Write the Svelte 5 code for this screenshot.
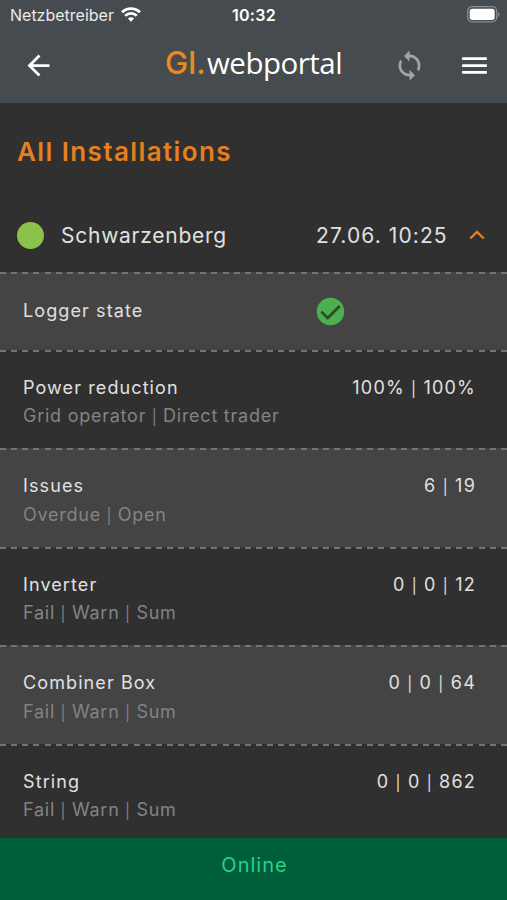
<script>
  const rows = [
    { label: 'Logger state', ok: true },
    { label: 'Power reduction', hint: 'Grid operator | Direct trader', value: '100% | 100%' },
    { label: 'Issues', hint: 'Overdue | Open', value: '6 | 19' },
    { label: 'Inverter', hint: 'Fail | Warn | Sum', value: '0 | 0 | 12' },
    { label: 'Combiner Box', hint: 'Fail | Warn | Sum', value: '0 | 0 | 64' },
    { label: 'String', hint: 'Fail | Warn | Sum', value: '0 | 0 | 862' }
  ];
</script>

{#snippet piped(text)}
  {#each text.split(' | ') as part, i}{#if i}<span class="pipe">{' | '}</span>{/if}{part}{/each}
{/snippet}

<div class="app">
  <header>
    <div class="status">
      <div class="carrier">
        <span>Netzbetreiber</span>
        <svg width="20" height="15" viewBox="0 0 20 15" fill="none" stroke="#fff" stroke-width="2.7">
          <path d="M1 5.3a12.7 12.7 0 0 1 18 0" />
          <path d="M4.2 8.7a8.2 8.2 0 0 1 11.6 0" />
          <path d="M10 14.7l-3.1-3.2a4.4 4.4 0 0 1 6.2 0z" fill="#fff" stroke="none" />
        </svg>
      </div>
      <time>10:32</time>
      <svg class="battery" width="33" height="17" viewBox="0 0 33 17">
        <rect x=".7" y=".7" width="29" height="15.2" rx="4.4" fill="none" stroke="#8b8e90" stroke-width="1.3" />
        <rect x="2.7" y="2.7" width="25" height="11.2" rx="2.6" fill="#fff" />
        <path d="M31.2 6v5c1.8-.7 1.8-4.3 0-5z" fill="#8b8e90" />
      </svg>
    </div>
    <nav>
      <svg class="back" width="33" height="33" viewBox="0 0 24 24" fill="#fff">
        <path d="M20 11H7.83l5.59-5.59L12 4l-8 8 8 8 1.41-1.41L7.83 13H20v-2z" />
      </svg>
      <div class="logo"><span class="gi">GI.</span><span class="portal">webportal</span></div>
      <svg class="sync" width="33" height="33" viewBox="0 0 24 24" fill="#a2a4a6">
        <path d="M12 4V1L8 5l4 4V6c3.31 0 6 2.69 6 6 0 1.01-.25 1.97-.7 2.8l1.46 1.46A7.93 7.93 0 0 0 20 12c0-4.42-3.58-8-8-8zm0 14c-3.31 0-6-2.69-6-6 0-1.01.25-1.97.7-2.8L5.24 7.74A7.93 7.93 0 0 0 4 12c0 4.42 3.58 8 8 8v3l4-4-4-4v3z" />
      </svg>
      <svg class="menu" width="33" height="33" viewBox="0 0 24 24" fill="#fff">
        <path d="M3 18h18v-2H3v2zm0-5h18v-2H3v2zm0-7v2h18V6H3z" />
      </svg>
    </nav>
  </header>

  <main>
    <h1>All Installations</h1>
    <div class="site">
      <i class="dot"></i>
      <span class="name">Schwarzenberg</span>
      <span class="date">27.06. 10:25</span>
      <svg width="16" height="10" viewBox="0 0 16 10" fill="none" stroke="#e08126" stroke-width="2.4">
        <path d="M1.2 8.5L8 1.9l6.8 6.6" />
      </svg>
    </div>
    <ul>
      {#each rows as row}
        <li class:single={row.ok}>
          <div class="text">
            <p class="label">{row.label}</p>
            {#if row.hint}<p class="hint">{@render piped(row.hint)}</p>{/if}
          </div>
          {#if row.ok}
            <svg class="check" width="33" height="33" viewBox="0 0 24 24">
              <circle cx="12" cy="12" r="10" fill="#4caf50" />
              <path d="M5.3 12.1l4.7 4.6 8.7-8.7" fill="none" stroke="#2c4a2e" stroke-width="2" />
            </svg>
          {:else}
            <span class="value">{@render piped(row.value)}</span>
          {/if}
        </li>
      {/each}
    </ul>
  </main>

  <footer>Online</footer>
</div>

<style>
  :global(body) {
    margin: 0;
    background: #303030;
  }

  .app {
    display: flex;
    flex-direction: column;
    height: 900px;
    overflow: hidden;
    background: #303030;
    color: #e0e0e0;
    font-family: Inter, sans-serif;
  }

  header {
    flex: none;
    height: 103px;
    background: #464b4f;
  }

  .status {
    display: grid;
    grid-template-columns: 1fr auto 1fr;
    align-items: center;
    height: 29px;
    padding: 0 7px 0 8px;
    color: #fff;
    font-size: 16px;
  }

  .carrier {
    display: flex;
    align-items: center;
    gap: 7px;
    padding-left: 2px;
    color: #e9eaeb;
  }

  .status time {
    font-weight: 600;
    letter-spacing: 0.3px;
  }

  .battery {
    justify-self: end;
  }

  nav {
    display: flex;
    align-items: center;
    height: 73px;
    padding: 0 16px 0 22px;
  }

  .logo {
    display: flex;
    align-items: baseline;
    margin-left: 110px;
    padding-bottom: 5px;
    line-height: 40px;
    white-space: nowrap;
  }

  .gi {
    width: 42px;
    color: #e98a1f;
    font-size: 31px;
    font-weight: 500;
    letter-spacing: -0.2px;
  }

  .portal {
    width: 136px;
    color: #fff;
    font-family: "Open Sans", sans-serif;
    font-size: 29.5px;
    letter-spacing: -0.5px;
  }

  .sync {
    margin-left: auto;
  }

  .menu {
    margin-left: 32px;
  }

  main {
    flex: 1;
    min-height: 0;
    overflow: hidden;
  }

  h1 {
    margin: 0;
    padding: 33px 17px 0;
    color: #e67f1e;
    font-size: 26px;
    font-weight: 600;
    line-height: 32px;
    letter-spacing: 1.4px;
  }

  .site {
    display: flex;
    align-items: center;
    height: 74px;
    margin-top: 30px;
    padding: 0 22px 0 17px;
    font-size: 21px;
    letter-spacing: 1.1px;
  }

  .name {
    letter-spacing: 0.75px;
  }

  .dot {
    width: 27px;
    height: 27px;
    margin-right: 17px;
    border-radius: 50%;
    background: #8bc34a;
  }

  .date {
    width: 153px;
    margin-left: auto;
    white-space: nowrap;
  }

  ul {
    margin: 0;
    padding: 0;
    list-style: none;
  }

  li {
    display: flex;
    justify-content: space-between;
    height: 98.5px;
    padding: 24px 31px 0 23px;
    box-sizing: border-box;
    background: repeating-linear-gradient(90deg, #747474 0 6px, transparent 6px 11.13px) 0 0 / 100% 2px no-repeat;
    font-size: 18px;
    line-height: 28.5px;
    letter-spacing: 1.1px;
  }

  li:nth-child(odd) {
    background-color: #444;
  }

  .single {
    height: 77.5px;
    align-items: center;
    padding-top: 1.5px;
  }

  p {
    margin: 0;
  }

  .hint {
    color: #838383;
    line-height: 28px;
    letter-spacing: 0.75px;
  }

  .pipe {
    font-size: 15px;
    line-height: 1;
    white-space: pre;
  }

  .hint .pipe {
    word-spacing: 0.6px;
  }

  .value {
    letter-spacing: 1.2px;
  }

  .value .pipe {
    word-spacing: 0.8px;
  }

  .check {
    margin-right: 129px;
  }

  footer {
    flex: none;
    height: 62px;
    background: #005f3b;
    color: #2bd08a;
    font-size: 20px;
    line-height: 54px;
    letter-spacing: 1px;
    text-indent: 2px;
    text-align: center;
  }
</style>
